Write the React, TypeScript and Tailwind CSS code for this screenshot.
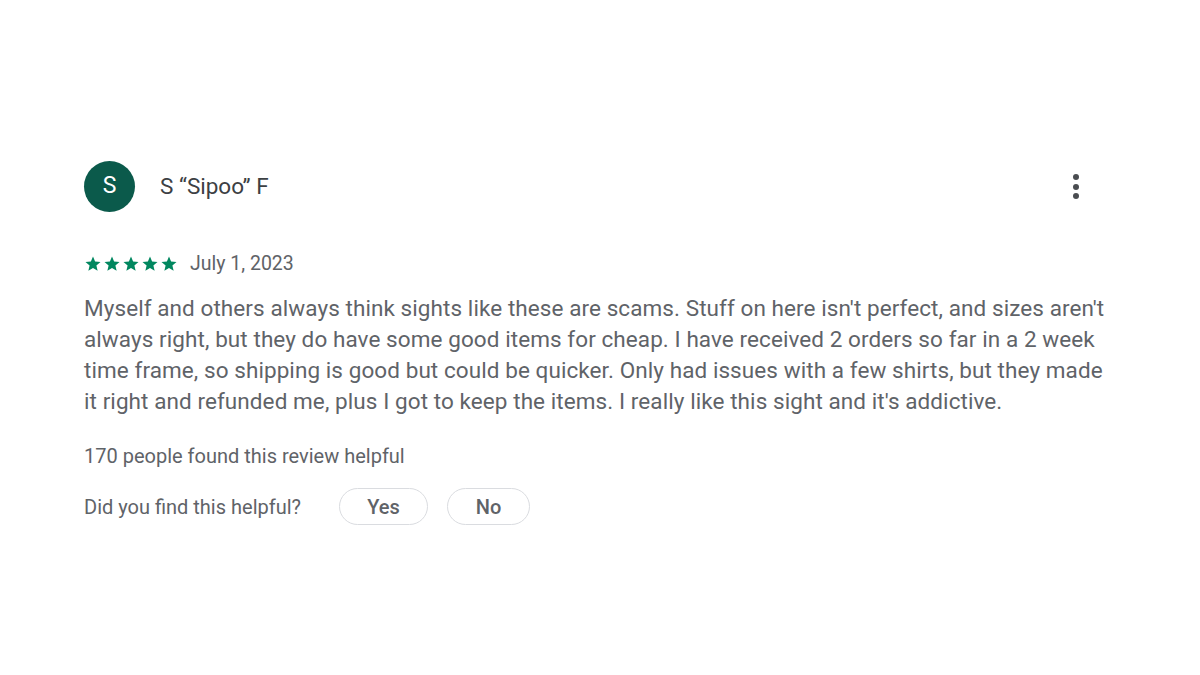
function Stars() {
  return (
    <div className="flex items-center gap-[1px]">
      {[0, 1, 2, 3, 4].map((i) => (
        <svg key={i} viewBox="0 0 24 24" className="h-[18px] w-[18px] fill-[#01875f]">
          <path d="M12 17.27L18.18 21l-1.64-7.03L22 9.24l-7.19-.61L12 2 9.19 8.63 2 9.24l5.46 4.73L5.82 21z" />
        </svg>
      ))}
    </div>
  );
}

export default function App() {
  return (
    <div className="min-h-[675px] w-[1200px] bg-white font-['Roboto',sans-serif]">
      <div className="px-[84px] pt-[161px]">
        <div className="flex items-center justify-between">
          <div className="flex items-center gap-[25px]">
            <div className="flex h-[51px] w-[51px] items-center justify-center rounded-full bg-[#0b5a4b] text-[23px] text-white">
              S
            </div>
            <span className="text-[22.5px] text-[#3c4043]">S “Sipoo” F</span>
          </div>
          <div className="mr-[37px] flex flex-col items-center gap-[3.5px]">
            <span className="h-[6px] w-[6px] rounded-full bg-[#4a4d51]" />
            <span className="h-[6px] w-[6px] rounded-full bg-[#4a4d51]" />
            <span className="h-[6px] w-[6px] rounded-full bg-[#4a4d51]" />
          </div>
        </div>

        <div className="mt-[38px] flex h-[28px] items-center gap-[12px]">
          <Stars />
          <span className="text-[19.5px] text-[#5f6368]">July 1, 2023</span>
        </div>

        <p className="mt-[15px] w-[1030px] text-[22.5px] leading-[31px] tracking-[0.08px] text-[#5f6368]">
          Myself and others always think sights like these are scams. Stuff on here isn't perfect, and
          sizes aren't always right, but they do have some good items for cheap. I have received 2
          orders so far in a 2 week time frame, so shipping is good but could be quicker. Only had
          issues with a few shirts, but they made it right and refunded me, plus I got to keep the
          items. I really like this sight and it's addictive.
        </p>

        <p className="mt-[25px] text-[20px] leading-[28px] text-[#5f6368]">
          170 people found this review helpful
        </p>

        <div className="mt-[18px] flex items-center">
          <span className="text-[20px] text-[#5f6368]">Did you find this helpful?</span>
          <button className="ml-[38px] h-[37px] w-[89px] rounded-full border border-[#dadce0] text-[20px] font-medium text-[#5f6368]">
            Yes
          </button>
          <button className="ml-[19px] h-[37px] w-[83px] rounded-full border border-[#dadce0] text-[20px] font-medium text-[#5f6368]">
            No
          </button>
        </div>
      </div>
    </div>
  );
}
